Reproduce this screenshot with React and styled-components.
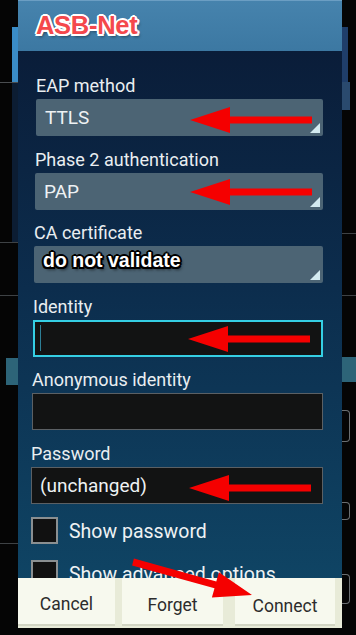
import React from "react";
import styled, { createGlobalStyle, css } from "styled-components";

const GlobalStyle = createGlobalStyle`
  html, body {
    margin: 0;
    padding: 0;
    background: #050505;
  }
  body {
    font-family: Roboto, "Liberation Sans", sans-serif;
  }
`;

const Page = styled.div`
  display: flex;
  width: 356px;
  height: 635px;
  overflow: hidden;
  background: #050505;
`;

const Gutter = styled.div`
  display: flex;
  flex-direction: column;
  width: ${(p) => p.$w}px;
  flex-shrink: 0;
`;

// pieces of the settings screen peeking out behind the dialog
const Backdrop = styled.div`
  height: ${(p) => p.$h}px;
  margin-left: ${(p) => p.$ml || 0}px;
  margin-right: ${(p) => p.$mr || 0}px;
  background: ${(p) => p.$bg || "transparent"};
  flex-shrink: 0;
  ${(p) =>
    p.$outline &&
    css`
      border: 1px solid #6b6f72;
      border-left: none;
      border-radius: 0 4px 4px 0;
    `}
`;

const Dialog = styled.div`
  position: relative;
  width: 324px;
  flex-shrink: 0;
  display: flex;
  flex-direction: column;
`;

const Header = styled.div`
  height: 50px;
  border-top: 1px solid #6b9ec3;
  display: flex;
  align-items: center;
  padding-left: 18px;
  background: linear-gradient(180deg, #4683ad 0%, #3c78a2 100%);
`;

const Title = styled.h1`
  margin: 0 0 2px;
  font-family: "Liberation Sans", Arial, sans-serif;
  font-weight: 700;
  font-size: 25.5px;
  letter-spacing: -0.3px;
  color: #f4484c;
  text-shadow: 2px 0 0 #fff, -2px 0 0 #fff, 0 2px 0 #fff, 0 -2px 0 #fff,
    1.5px 1.5px 0 #fff, -1.5px 1.5px 0 #fff, 1.5px -1.5px 0 #fff,
    -1.5px -1.5px 0 #fff, 2px 3px 3px rgba(0, 0, 0, 0.45);
`;

const Body = styled.div`
  height: 527px;
  overflow: hidden;
  box-sizing: border-box;
  padding: 25px 19px 0 0;
  background: linear-gradient(180deg, #0a1d39 0%, #0c2d4d 45%, #0f4464 100%);
`;

const Field = styled.div`
  display: flex;
  flex-direction: column;
  margin-left: ${(p) => p.$inset}px;
  margin-bottom: 13.5px;
`;

const Label = styled.div`
  font-size: 18px;
  line-height: 20px;
  color: #e9eef1;
  margin-bottom: 3px;
  white-space: nowrap;
`;

const Box = styled.div`
  position: relative;
  height: 37px;
  box-sizing: border-box;
  display: flex;
  align-items: center;
  padding-left: 9px;
  font-size: 19px;
  color: #eef2f4;
  ${(p) =>
    p.$kind === "spinner" &&
    css`
      background: #4c6474;
      border-radius: 2px;
      &::after {
        content: "";
        position: absolute;
        right: 3px;
        bottom: 3px;
        border-style: solid;
        border-width: 0 0 10px 10px;
        border-color: transparent transparent #d3eaf0 transparent;
      }
    `}
  ${(p) =>
    p.$kind === "input" &&
    css`
      background: #121313;
      border: 1px solid #5b6064;
      padding-left: 8px;
    `}
  ${(p) =>
    p.$kind === "focused" &&
    css`
      background: #121313;
      border: 2px solid #35cfe4;
      padding-left: 5px;
    `}
`;

const Cursor = styled.span`
  width: 1px;
  height: 26px;
  background: #2d7f96;
`;

const Stamp = styled.span`
  font-family: "Liberation Sans", Arial, sans-serif;
  font-weight: 700;
  font-size: 19.5px;
  color: #fff;
  margin-top: -9px;
  text-shadow: 2px 0 0 #000, -2px 0 0 #000, 0 2px 0 #000, 0 -2px 0 #000,
    1.5px 1.5px 0 #000, -1.5px 1.5px 0 #000, 1.5px -1.5px 0 #000,
    -1.5px -1.5px 0 #000, 2px 3px 3px rgba(0, 0, 0, 0.6);
`;

const ArrowMark = styled.svg`
  position: absolute;
  right: 11px;
  top: calc(50% + ${(p) => p.$dy || 1.5}px);
  transform: translateY(-50%);
  width: 122px;
  height: 26px;
`;

const CheckRow = styled.div`
  display: flex;
  align-items: center;
  gap: 11px;
  height: 27px;
  margin: ${(p) => (p.$first ? "1px" : "0")} 0 16px 13px;
`;

const Check = styled.span`
  width: 27px;
  height: 27px;
  box-sizing: border-box;
  background: #111;
  border: 2px solid #8a8f91;
  flex-shrink: 0;
`;

const CheckText = styled.span`
  font-size: 19.5px;
  color: #eef2f4;
  white-space: nowrap;
  margin-top: 2px;
`;

const ButtonBar = styled.div`
  height: 50px;
  display: flex;
  background: #e8ebd8;
`;

const Button = styled.button`
  width: ${(p) => p.$w}px;
  margin-left: ${(p) => p.$ml || 0}px;
  height: 48px;
  padding: ${(p) => p.$pt || 8}px 0 0;
  border: none;
  border-bottom: 2px solid #d2d5c3;
  background: #f7f9ee;
  font-family: Roboto, "Liberation Sans", sans-serif;
  font-size: 17.5px;
  color: #2c2c2c;
`;

const DiagonalArrow = styled.svg`
  position: absolute;
  left: 102px;
  top: 550px;
  width: 140px;
  height: 60px;
`;

const Arrow = ({ dy }) => (
  <ArrowMark $dy={dy} viewBox="0 0 122 26">
    <polygon points="0,13 40,0 40,9.5 122,9.5 122,16.5 40,16.5 40,26" fill="#f50000" />
  </ArrowMark>
);

const App = () => (
  <>
    <GlobalStyle />
    <Page>
      <Gutter $w={18}>
        <Backdrop $h={27} />
        <Backdrop $h={55} $ml={12} $bg="#3a8cc7" />
        <Backdrop $h={1} $bg="#4a4d50" />
        <Backdrop $h={159} $ml={12} $bg="#0c1d33" />
        <Backdrop $h={1} $bg="#3e4245" />
        <Backdrop $h={52} />
        <Backdrop $h={1} $bg="#3e4245" />
        <Backdrop $h={62} />
        <Backdrop $h={27} $ml={6} $bg="#2d6478" />
        <Backdrop $h={158} />
        <Backdrop $h={1} $bg="#3e4245" />
      </Gutter>
      <Dialog>
        <Header>
          <Title>ASB-Net</Title>
        </Header>
        <Body>
          <Field $inset={18}>
            <Label>EAP method</Label>
            <Box $kind="spinner">
              TTLS
              <Arrow dy={2} />
            </Box>
          </Field>
          <Field $inset={17}>
            <Label>Phase 2 authentication</Label>
            <Box $kind="spinner">
              PAP
              <Arrow dy={1} />
            </Box>
          </Field>
          <Field $inset={16}>
            <Label>CA certificate</Label>
            <Box $kind="spinner">
              <Stamp>do not validate</Stamp>
            </Box>
          </Field>
          <Field $inset={15}>
            <Label>Identity</Label>
            <Box $kind="focused">
              <Cursor />
              <Arrow dy={1} />
            </Box>
          </Field>
          <Field $inset={14}>
            <Label>Anonymous identity</Label>
            <Box $kind="input" />
          </Field>
          <Field $inset={13}>
            <Label>Password</Label>
            <Box $kind="input">
              (unchanged)
              <Arrow dy={2.5} />
            </Box>
          </Field>
          <CheckRow $first>
            <Check />
            <CheckText>Show password</CheckText>
          </CheckRow>
          <CheckRow>
            <Check />
            <CheckText>Show advanced options</CheckText>
          </CheckRow>
        </Body>
        <ButtonBar>
          <Button $w={97} $pt={6}>Cancel</Button>
          <Button $w={101} $ml={7} $pt={7}>Forget</Button>
          <Button $w={100} $ml={12} $pt={10}>Connect</Button>
        </ButtonBar>
        <DiagonalArrow viewBox="0 0 140 60">
          <polygon
            points="13.9,8.6 96.3,31.5 98.9,22.3 132,45 91.9,47.4 94.5,38.2 12.1,15.4"
            fill="#f50000"
          />
        </DiagonalArrow>
      </Dialog>
      <Gutter $w={14}>
        <Backdrop $h={27} />
        <Backdrop $h={55} $mr={8} $bg="#1f3e6a" />
        <Backdrop $h={28} $mr={6} $bg="#2a4a6e" />
        <Backdrop $h={123} />
        <Backdrop $h={1} $bg="#3e4245" />
        <Backdrop $h={61} />
        <Backdrop $h={1} $bg="#3e4245" />
        <Backdrop $h={61} />
        <Backdrop $h={25} $bg="#2d6478" />
        <Backdrop $h={28} />
        <Backdrop $h={30} $mr={6} $outline />
        <Backdrop $h={60} />
        <Backdrop $h={16} $mr={6} $outline />
        <Backdrop $h={54} />
        <Backdrop $h={28} $mr={6} $outline />
      </Gutter>
    </Page>
  </>
);

export default App;
